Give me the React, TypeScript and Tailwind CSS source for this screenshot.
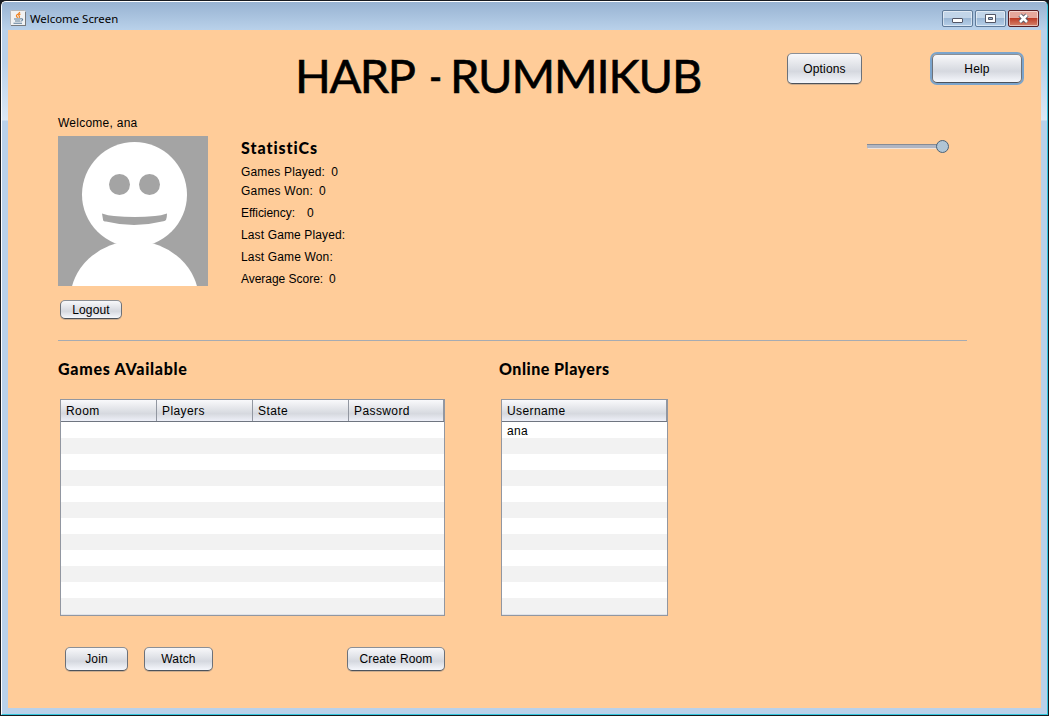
import type { ReactNode } from "react";

const text = "font-['Liberation_Sans',Arial,sans-serif] text-[12px] leading-[16px] text-black whitespace-pre";
const face =
  "flex items-center justify-center rounded-[5px] border border-t-[#8b8f96] border-x-[#6c7179] border-b-[#4c525b] bg-linear-to-b from-[#f8f8fa] via-[#d5d8df] via-60% to-[#f5f7fc] shadow-[0_1px_0_rgba(110,115,125,0.35)]";

function Button({ className, children }: { className: string; children: ReactNode }) {
  return (
    <button className={`${face} ${text} ${className}`}>
      <span className="tracking-[0.15px]">{children}</span>
    </button>
  );
}

function Heading({ className, children }: { className: string; children: ReactNode }) {
  return (
    <h2
      className={`font-['Lato',sans-serif] text-[16px] font-black leading-[20px] whitespace-pre text-black [font-variant-ligatures:none] ${className}`}
    >
      {children}
    </h2>
  );
}

function Table({ className, columns, rows }: { className: string; columns: string[]; rows: string[] }) {
  return (
    <div className={`flex h-[217px] flex-col border border-[#9297a1] bg-white ${className}`}>
      <div className="flex h-[22px] shrink-0 border-b border-[#6f7580] bg-linear-to-b from-[#f9f9fb] via-[#d6d9df] via-65% to-[#eef0f8]">
        {columns.map((c) => (
          <div
            key={c}
            className={`${text} w-[96px] shrink-0 border-r border-[#9297a1] pt-[3px] pl-[5px] tracking-[0.4px] last:w-auto last:shrink last:grow`}
          >
            {c}
          </div>
        ))}
      </div>
      {Array.from({ length: 12 }, (_, i) => (
        <div key={i} className={`${text} h-4 shrink-0 pt-px pl-[5px] tracking-[0.3px] odd:bg-[#f2f2f2] even:bg-white`}>
          {rows[i]}
        </div>
      ))}
      <div className="h-px bg-[#dfe2e8]" />
    </div>
  );
}

function JavaIcon() {
  return (
    <svg width="16" height="16" viewBox="0 0 16 16" className="shrink-0">
      <rect x=".5" y=".5" width="15" height="15" rx="1" fill="#f1f2f3" stroke="#b4b7ba" />
      <path d="M1 15.500h15M15.500 2v14" stroke="#77797c" />
      <path d="M9.800 2Q9 4 7 4.800q-1.500 1.200 .8 3M10.500 4Q8 5 9.200 6.200q.8 .8-.4 1.600" fill="none" stroke="#ee8322" strokeWidth="1.200" />
      <path d="M4 9h6.500M5 11h5M3.500 13.200h8.500M10.500 8.800c3.300-.5 2.300 2.200 0 2.400" fill="none" stroke="#5c7c98" strokeWidth="1.100" />
    </svg>
  );
}

function WindowButton({ kind }: { kind: "min" | "max" | "close" }) {
  const close = kind === "close";
  return (
    <button
      className={`flex h-[17px] w-[31px] items-center justify-center rounded-[2px] border inset-shadow-[0_0_0_1px_rgba(255,255,255,0.5)] ${
        close
          ? "border-[#571c22] bg-linear-to-b from-[#e6a79c] from-45% via-[#bd3b26] via-50% to-[#d4826c]"
          : "border-[#5f7a99] bg-linear-to-b from-[#c2d5e9] from-45% via-[#9bb7d5] via-50% to-[#b6cfe8]"
      }`}
    >
      <svg width="13" height="11" viewBox="0 0 13 11">
        {kind === "min" && <rect x="1.500" y="5.500" width="10" height="4" rx=".5" fill="#fff" stroke="#535666" />}
        {kind === "max" && (
          <path d="M1.500 1.500h10v8h-10zM4.500 4.500h4v2h-4z" fill="#fff" fillRule="evenodd" stroke="#535666" />
        )}
        {close && (
          <>
            <path d="m3 2 7 7M10 2 3 9" stroke="#535666" strokeWidth="4.400" />
            <path d="m3 2 7 7M10 2 3 9" stroke="#fff" strokeWidth="2.500" />
          </>
        )}
      </svg>
    </button>
  );
}

const stats = [
  { label: "Games Played:", value: "0", style: "h-[19px] gap-[6px] tracking-[0.16px]" },
  { label: "Games Won:", value: "0", style: "h-[22px] gap-[6px] tracking-[0.22px]" },
  { label: "Efficiency:", value: "0", style: "h-[22px] gap-[12px] tracking-[-0.05px]" },
  { label: "Last Game Played:", value: "", style: "h-[22px] tracking-[0.13px]" },
  { label: "Last Game Won:", value: "", style: "h-[22px] tracking-[0.15px]" },
  { label: "Average Score:", value: "0", style: "h-[16px] gap-[6px] tracking-[-0.03px]" },
];

export default function App() {
  return (
    <div className="h-[716px] w-[1049px] overflow-hidden bg-[#171a20] p-px">
      <div className="flex h-[714px] flex-col rounded-t-[5px] border border-t-white border-r-[#32c5dc] border-b-[#32c5dc] border-l-white bg-[linear-gradient(to_bottom,#b9d1ea_60px,#dce8f5_118px,#b9d1ea_119px)]">
        <header className="flex h-[28px] shrink-0 items-start rounded-t-[4px] bg-linear-to-b from-[#98b3d2] to-[#b9d1ea] pt-[8px] pr-[8px] pl-[8px]">
          <JavaIcon />
          <span className="ml-[4px] pt-px font-['Noto_Sans',sans-serif] text-[11.400px] leading-[16px] text-black">
            Welcome Screen
          </span>
          <div className="ml-auto flex gap-[2px]">
            <WindowButton kind="min" />
            <WindowButton kind="max" />
            <WindowButton kind="close" />
          </div>
        </header>
        <main className="mr-[6px] ml-[6px] h-[678px] bg-[#ffcc99]">
          <div className="flex h-[84px] items-start">
            <h1 className="ml-[287px] flex w-[492px] pt-[16px] font-['Lato',sans-serif] text-[47px] leading-[58px] whitespace-pre text-black [-webkit-text-stroke:0.6px_black]">
              <span className="w-[134px] tracking-[-1.500px]">HARP </span>
              <span className="w-[21px] origin-left scale-x-75">-</span>
              <span className="tracking-[-1.150px]">RUMMIKUB</span>
            </h1>
            <Button className="mt-[23px] h-[31px] w-[75px]">Options</Button>
            <Button className="mt-[24px] ml-[70px] h-[29px] w-[90px] ring-2 ring-[#7ba4cc]">Help</Button>
          </div>
          <div className="flex h-[226px]">
            <section className="ml-[50px] w-[183px]">
              <p className={`${text} pt-px tracking-[0.25px]`}>Welcome, ana</p>
              <svg width="150" height="150" viewBox="0 0 150 150" className="mt-[5px]">
                <path fill="#a4a4a4" d="M0 0h150v150H0z" />
                <circle cx="76.500" cy="58.500" r="52.500" fill="#fff" />
                <ellipse cx="76.500" cy="165" rx="64.500" ry="60" fill="#fff" />
                <circle cx="61.500" cy="48.500" r="10.500" fill="#a4a4a4" />
                <circle cx="91.500" cy="48.500" r="10.500" fill="#a4a4a4" />
                <path fill="#a4a4a4" d="M44 77.500q6 2 12 2.500 21 2 41 0 6-.5 12-2.500 0 4-1 6.500-1 1-4 1.500-28 7-56 0-3 0-3-2z" />
              </svg>
              <Button className="mt-[14px] ml-[2px] h-[19px] w-[62px]">Logout</Button>
            </section>
            <section className="w-[625px] pt-[24px]">
              <Heading className="mb-[6px] tracking-[0.950px]">StatistiCs</Heading>
              {stats.map((s) => (
                <div key={s.label} className={`${text} flex ${s.style}`}>
                  <span>{s.label}</span>
                  <span>{s.value}</span>
                </div>
              ))}
            </section>
            <svg width="84" height="16" className="mt-[24px]">
              <path d="M1 6h72v4H1z" fill="#b0b5c2" />
              <path d="M1 6.500h72" stroke="#858b96" />
              <path d="M2 10.500h71" stroke="#eee3dc" />
              <circle cx="76.500" cy="8.500" r="6" fill="#b0c5d5" stroke="#4c6276" />
            </svg>
          </div>
          <div className="ml-[50px] h-px w-[909px] bg-[#a6abb2]" />
          <div className="flex pl-[50px]">
            <section className="w-[441px] pt-[18px]">
              <Heading className="mb-[20px] tracking-[0.720px]">Games AVailable</Heading>
              <Table className="ml-[2px] w-[385px]" columns={["Room", "Players", "State", "Password"]} rows={[]} />
              <div className="mt-[31px] ml-[7px] flex h-[24px]">
                <Button className="w-[63px]">Join</Button>
                <Button className="ml-[16px] w-[69px]">Watch</Button>
                <Button className="ml-[134px] w-[98px]">Create Room</Button>
              </div>
            </section>
            <section className="pt-[18px]">
              <Heading className="mb-[20px] tracking-[0.5px]">Online Players</Heading>
              <Table className="ml-[2px] w-[167px]" columns={["Username"]} rows={["ana"]} />
            </section>
          </div>
        </main>
      </div>
    </div>
  );
}
